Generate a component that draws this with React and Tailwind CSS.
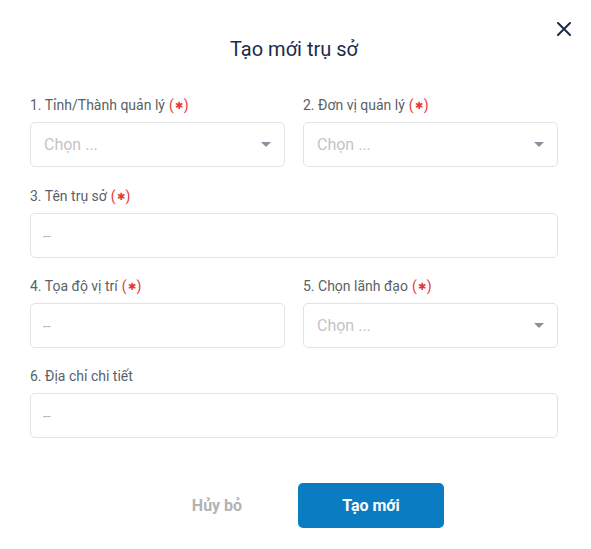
import { useState } from 'react'

const font = { fontFamily: 'Roboto, "Noto Sans", sans-serif' }

function Label({ text, required }) {
  return (
    <div className="h-5 mb-[7px] text-[14px] leading-5 text-[#5a5f68] whitespace-nowrap">
      {text}
      {required && (
        <span className="ml-1 text-[#e53935]">
          (<span className="text-[10px] align-[1px] px-[1px]">✱</span>)
        </span>
      )}
    </div>
  )
}

function SelectBox() {
  return (
    <div className="h-[45px] rounded-[5px] border border-[#e3e3e3] bg-white flex items-center justify-between pl-[13px] pr-[13px]">
      <span className="text-[16px] text-[#c4c4c4]">Chọn ...</span>
      <svg width="10" height="5" viewBox="0 0 10 5">
        <path d="M0 0h10L5 5z" fill="#8c90a0" />
      </svg>
    </div>
  )
}

function TextBox({ value, onChange }) {
  return (
    <input
      value={value}
      onChange={(e) => onChange(e.target.value)}
      placeholder="--"
      className="h-[45px] w-full rounded-[5px] border border-[#e3e3e3] bg-white px-[12px] text-[14px] text-[#333] placeholder:text-[#b5b5b5] outline-none"
    />
  )
}

export default function App() {
  const [form, setForm] = useState({ name: '', coords: '', address: '' })
  const set = (key) => (v) => setForm({ ...form, [key]: v })

  return (
    <div className="relative min-h-[549px] bg-white" style={font}>
      {/* Close */}
      <button className="absolute left-[556px] top-[21px] w-4 h-4 flex items-center justify-center">
        <svg width="14" height="14" viewBox="0 0 14 14">
          <path d="M1 1l12 12M13 1L1 13" stroke="#1e2b4f" strokeWidth="2" strokeLinecap="round" />
        </svg>
      </button>

      <div className="pt-[35px] pl-[30px] w-[558px]">
        <h2 className="text-center text-[20px] leading-7 font-normal text-[#1c2a4f] mb-8">Tạo mới trụ sở</h2>

        <div className="grid grid-cols-2 gap-x-[18px] gap-y-[18px]">
          <div className="pb-px">
            <Label text="1. Tỉnh/Thành quản lý" required />
            <SelectBox />
          </div>
          <div className="pb-px">
            <Label text="2. Đơn vị quản lý" required />
            <SelectBox />
          </div>
          <div className="col-span-2">
            <Label text="3. Tên trụ sở" required />
            <TextBox value={form.name} onChange={set('name')} />
          </div>
          <div>
            <Label text="4. Tọa độ vị trí" required />
            <TextBox value={form.coords} onChange={set('coords')} />
          </div>
          <div>
            <Label text="5. Chọn lãnh đạo" required />
            <SelectBox />
          </div>
          <div className="col-span-2">
            <Label text="6. Địa chỉ chi tiết" />
            <TextBox value={form.address} onChange={set('address')} />
          </div>
        </div>

        <div className="mt-[45px] flex justify-center gap-2">
          <button className="w-[146px] h-[45px] rounded-[5px] text-[16px] font-bold text-[#b3b3b3]">Hủy bỏ</button>
          <button className="w-[146px] h-[45px] rounded-[5px] bg-[#0a7cc2] text-[16px] font-bold text-white">Tạo mới</button>
        </div>
      </div>
    </div>
  )
}
